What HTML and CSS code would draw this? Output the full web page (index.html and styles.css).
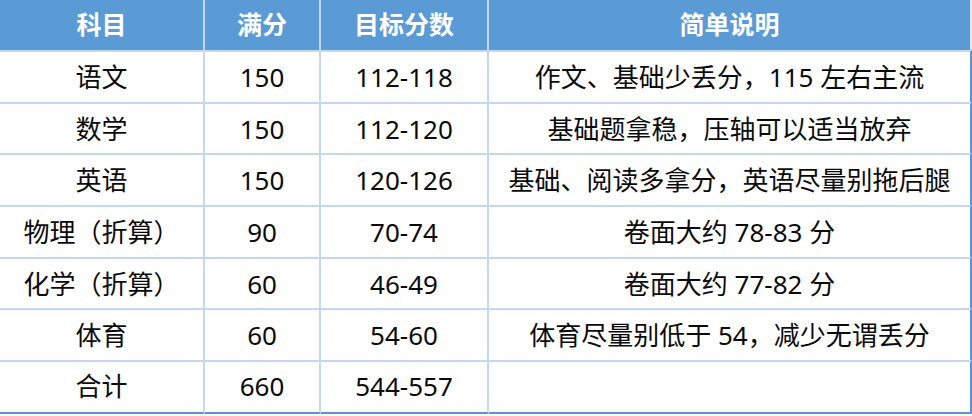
FILE: index.html
```html
<!DOCTYPE html>
<html lang="zh-CN">
<head>
<meta charset="utf-8">
<title>目标分数</title>
<link rel="stylesheet" href="styles.css">
</head>
<body>
<div class="score-table">
  <div class="cell head">科目</div>
  <div class="cell head">满分</div>
  <div class="cell head">目标分数</div>
  <div class="cell head last">简单说明</div>

  <div class="cell">语文</div>
  <div class="cell">150</div>
  <div class="cell">112-118</div>
  <div class="cell last">作文、基础少丢分，115 左右主流</div>

  <div class="cell">数学</div>
  <div class="cell">150</div>
  <div class="cell">112-120</div>
  <div class="cell last">基础题拿稳，压轴可以适当放弃</div>

  <div class="cell">英语</div>
  <div class="cell">150</div>
  <div class="cell">120-126</div>
  <div class="cell last">基础、阅读多拿分，英语尽量别拖后腿</div>

  <div class="cell">物理（折算）</div>
  <div class="cell">90</div>
  <div class="cell">70-74</div>
  <div class="cell last">卷面大约 78-83 分</div>

  <div class="cell">化学（折算）</div>
  <div class="cell">60</div>
  <div class="cell">46-49</div>
  <div class="cell last">卷面大约 77-82 分</div>

  <div class="cell">体育</div>
  <div class="cell">60</div>
  <div class="cell">54-60</div>
  <div class="cell last">体育尽量别低于 54，减少无谓丢分</div>

  <div class="cell bottom">合计</div>
  <div class="cell bottom">660</div>
  <div class="cell bottom">544-557</div>
  <div class="cell bottom last"></div>
</div>
</body>
</html>
```
FILE: styles.css
```css
html, body {
  margin: 0;
  padding: 0;
  background: #ffffff;
}

body {
  font-family: "Noto Sans", "Noto Sans CJK SC", sans-serif;
  color: #0a0a0a;
}

.score-table {
  display: grid;
  grid-template-columns: 205px 116px 168px 483px;
  grid-template-rows: 50px 51.7px 51.7px 51.7px 51.7px 51.7px 51.7px 54px;
  width: 972px;
}

.cell {
  box-sizing: border-box;
  display: flex;
  align-items: center;
  justify-content: center;
  font-size: 26px;
  line-height: 1;
  white-space: nowrap;
  border-top: 2px solid #c3d8ef;
  border-right: 2px solid #c3d8ef;
}

.head {
  background: #5b9bd5;
  color: #ffffff;
  font-weight: 700;
  font-size: 25px;
  border-top: none;
  padding-bottom: 1px;
}

.cell.last {
  border-right: 2px solid #5b94cf;
}

.head.last {
  border-right: 2px solid #dce8f6;
}

.bottom {
  border-bottom: 2px solid #5b94cf;
  padding-bottom: 2px;
}
```
